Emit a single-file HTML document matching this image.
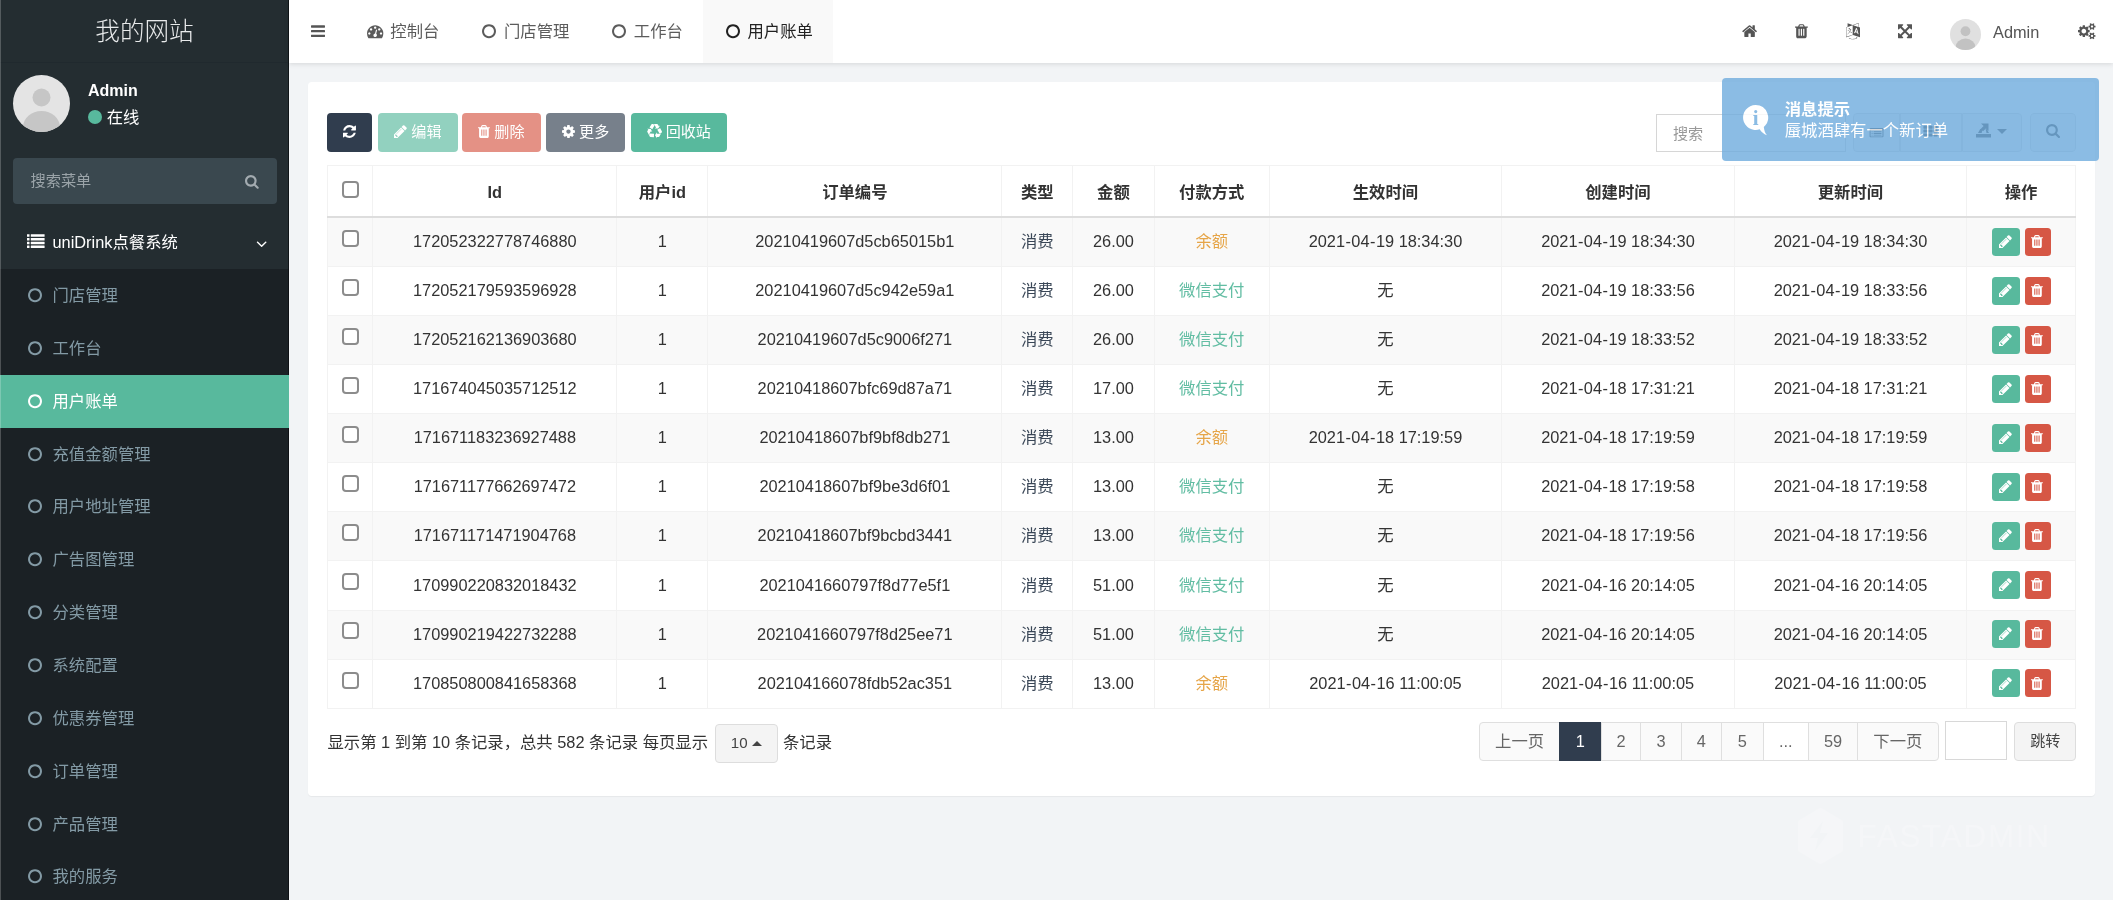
<!DOCTYPE html><html lang="zh-CN"><head><meta charset="utf-8"><title>FastAdmin</title><style>
*{box-sizing:border-box}
html,body{margin:0;padding:0}
body{width:2113px;height:900px;overflow:hidden;background:#f2f4f6;font-family:"Liberation Sans","Noto Sans CJK SC",sans-serif;font-size:16.35px;color:#333;position:relative;-webkit-font-smoothing:antialiased}
#wrap{position:absolute;left:0;top:0;width:2113px;height:900px;will-change:transform;overflow:hidden}
svg.ic{display:inline-block;vertical-align:middle;overflow:visible}
.abs{position:absolute}
#sidebar{position:absolute;left:0;top:0;width:289px;height:900px;background:#242d31}
#edge{position:absolute;left:0;top:0;width:1.2px;height:900px;background:rgba(255,255,255,.22);z-index:5}
#logo{position:absolute;left:0;top:0;width:289px;height:63px;line-height:63px;text-align:center;color:#e8eaeb;font-size:24.6px;font-weight:300;border-bottom:1px solid #20292e}
#avatar{position:absolute;left:12.5px;top:75px;width:57px;height:57px;border-radius:50%;background:#e4e4e4;overflow:hidden}
#uname{position:absolute;left:88px;top:80.5px;color:#fff;font-weight:bold;font-size:16px;line-height:20px}
#ustat{position:absolute;left:88px;top:107px;color:#fff;font-size:16.35px;line-height:20px}
#ustat i{display:inline-block;width:14px;height:14px;border-radius:50%;background:#58b99d;vertical-align:-1px;margin-right:4.7px}
#msearch{position:absolute;left:12.5px;top:157.5px;width:264.5px;height:46px;border-radius:4px;background:#3a484f;color:#9aa3a8;font-size:15.2px;line-height:46px;padding-left:18px}
#msearch svg{position:absolute;right:18.7px;top:16.2px}
.mhead{position:absolute;left:0;top:216px;width:289px;height:53px;line-height:53px;color:#fff;font-size:16.35px;background:transparent}
#submenu{position:absolute;left:0;top:269px;width:289px;height:631px;background:#1b2125}
.mi{position:absolute;left:0;width:289px;height:53px;line-height:53px;color:#839aa5;font-size:16.35px}
.mi.act{background:#58b99d;color:#fff}
.mi svg{position:absolute;left:27.7px;top:18px}
.mi span{position:absolute;left:52.5px;top:0}
#header{position:absolute;left:289px;top:0;width:1824px;height:63px;background:#fff;box-shadow:0 1px 5px rgba(0,0,0,.12)}
.tab{position:absolute;top:0;height:63px;line-height:62px;font-size:16.35px;color:#4a4a4a;white-space:nowrap}
.tab svg{margin-right:6px;vertical-align:-2px}
.tab.act{background:#f9f9f9;color:#222}
#panel{position:absolute;left:308.2px;top:82px;width:1786.5px;height:713.7px;background:#fff;border-radius:4px;box-shadow:0 1px 1px rgba(0,0,0,.05)}
.btn{position:absolute;top:113.3px;height:39px;border-radius:4px;color:#fff;font-size:15.1px;line-height:37.4px;text-align:center;white-space:nowrap}
.btn svg{vertical-align:-2px;margin-right:4px}
table{position:absolute;left:327px;top:164.7px;border-collapse:collapse;table-layout:fixed;width:1749px;font-size:16.35px}
th,td{border:1px solid #f2f2f2;text-align:center;padding:0;white-space:nowrap;overflow:hidden;line-height:20px;vertical-align:top}
th{height:52.1px;padding-top:16.6px;font-weight:bold;color:#333;border-bottom:2px solid #dddddd}
td{height:49.1px;color:#333;padding-top:13.1px}
tr.odd td{background:#f9f9f9}
.cb{display:inline-block;width:17px;height:17px;border:2px solid #8c8c8c;border-radius:4px;background:#fff;vertical-align:middle;position:relative;top:-4.4px;left:0.4px}
th .cb{top:-4.6px}
.hy{padding:0 .46px}
.tp{color:#3a4757}.tg{color:#62bda3}.to{color:#e6a548}
.ab{position:relative;top:-3.3px;display:inline-block;width:28px;height:28px;border-radius:3.5px;vertical-align:middle;text-align:center;line-height:24px}
.ab svg{position:relative;left:-.7px}
.ab.e{background:#58b99d;margin-right:5px;margin-left:0}.ab.d{background:#d65745;width:25.8px}
</style></head><body><div id="wrap">
<div id="sidebar">
<div id="logo">我的网站</div>
<div id="avatar"><svg width="57" height="57" viewBox="0 0 57 57"><circle cx="28.5" cy="22.5" r="9" fill="#c6c6c6"/><ellipse cx="28.5" cy="52" rx="18.5" ry="16" fill="#c6c6c6"/></svg></div>
<div id="uname">Admin</div><div id="ustat"><i></i>在线</div>
<div id="msearch">搜索菜单<svg class="ic " width="13.74" height="14.80" viewBox="0 -1536 1664 1792" style=""><path fill="#a3abb0" transform="scale(1,-1)" d="M1152 704q0 185 -131.5 316.5t-316.5 131.5t-316.5 -131.5t-131.5 -316.5t131.5 -316.5t316.5 -131.5t316.5 131.5t131.5 316.5zM1664 -128q0 -52 -38 -90t-90 -38q-54 0 -90 38l-343 342q-179 -124 -399 -124q-143 0 -273.5 55.5t-225 150t-150 225t-55.5 273.5
t55.5 273.5t150 225t225 150t273.5 55.5t273.5 -55.5t225 -150t150 -225t55.5 -273.5q0 -220 -124 -399l343 -343q37 -37 37 -90z"/></svg></div>
<div class="mhead"><svg class="ic " width="17.60" height="17.60" viewBox="0 -1536 1792 1792" style="position:absolute;left:26.5px;top:17px"><path fill="#fff" transform="scale(1,-1)" d="M256 224v-192q0 -13 -9.5 -22.5t-22.5 -9.5h-192q-13 0 -22.5 9.5t-9.5 22.5v192q0 13 9.5 22.5t22.5 9.5h192q13 0 22.5 -9.5t9.5 -22.5zM256 608v-192q0 -13 -9.5 -22.5t-22.5 -9.5h-192q-13 0 -22.5 9.5t-9.5 22.5v192q0 13 9.5 22.5t22.5 9.5h192q13 0 22.5 -9.5
t9.5 -22.5zM256 992v-192q0 -13 -9.5 -22.5t-22.5 -9.5h-192q-13 0 -22.5 9.5t-9.5 22.5v192q0 13 9.5 22.5t22.5 9.5h192q13 0 22.5 -9.5t9.5 -22.5zM1792 224v-192q0 -13 -9.5 -22.5t-22.5 -9.5h-1344q-13 0 -22.5 9.5t-9.5 22.5v192q0 13 9.5 22.5t22.5 9.5h1344
q13 0 22.5 -9.5t9.5 -22.5zM256 1376v-192q0 -13 -9.5 -22.5t-22.5 -9.5h-192q-13 0 -22.5 9.5t-9.5 22.5v192q0 13 9.5 22.5t22.5 9.5h192q13 0 22.5 -9.5t9.5 -22.5zM1792 608v-192q0 -13 -9.5 -22.5t-22.5 -9.5h-1344q-13 0 -22.5 9.5t-9.5 22.5v192q0 13 9.5 22.5
t22.5 9.5h1344q13 0 22.5 -9.5t9.5 -22.5zM1792 992v-192q0 -13 -9.5 -22.5t-22.5 -9.5h-1344q-13 0 -22.5 9.5t-9.5 22.5v192q0 13 9.5 22.5t22.5 9.5h1344q13 0 22.5 -9.5t9.5 -22.5zM1792 1376v-192q0 -13 -9.5 -22.5t-22.5 -9.5h-1344q-13 0 -22.5 9.5t-9.5 22.5v192
q0 13 9.5 22.5t22.5 9.5h1344q13 0 22.5 -9.5t9.5 -22.5z"/></svg><span style="position:absolute;left:52.5px">uniDrink点餐系统</span><svg class="ic " width="11.31" height="17.60" viewBox="0 -1536 1152 1792" style="position:absolute;left:255.8px;top:19px"><path fill="#fff" transform="scale(1,-1)" d="M1075 800q0 -13 -10 -23l-466 -466q-10 -10 -23 -10t-23 10l-466 466q-10 10 -10 23t10 23l50 50q10 10 23 10t23 -10l393 -393l393 393q10 10 23 10t23 -10l50 -50q10 -10 10 -23z"/></svg></div>
<div id="submenu"></div><div class="abs" style="left:287.7px;top:0;width:1.3px;height:900px;background:rgba(8,12,14,.7)"></div>
<div class="mi" style="top:269.00px"><svg class="ic " width="14.01" height="16.35" viewBox="0 -1536 1536 1792" style=""><path fill="currentColor" transform="scale(1,-1)" d="M768 1184q-148 0 -273 -73t-198 -198t-73 -273t73 -273t198 -198t273 -73t273 73t198 198t73 273t-73 273t-198 198t-273 73zM1536 640q0 -209 -103 -385.5t-279.5 -279.5t-385.5 -103t-385.5 103t-279.5 279.5t-103 385.5t103 385.5t279.5 279.5t385.5 103t385.5 -103
t279.5 -279.5t103 -385.5z"/></svg><span>门店管理</span></div>
<div class="mi" style="top:321.85px"><svg class="ic " width="14.01" height="16.35" viewBox="0 -1536 1536 1792" style=""><path fill="currentColor" transform="scale(1,-1)" d="M768 1184q-148 0 -273 -73t-198 -198t-73 -273t73 -273t198 -198t273 -73t273 73t198 198t73 273t-73 273t-198 198t-273 73zM1536 640q0 -209 -103 -385.5t-279.5 -279.5t-385.5 -103t-385.5 103t-279.5 279.5t-103 385.5t103 385.5t279.5 279.5t385.5 103t385.5 -103
t279.5 -279.5t103 -385.5z"/></svg><span>工作台</span></div>
<div class="mi act" style="top:374.70px"><svg class="ic " width="14.01" height="16.35" viewBox="0 -1536 1536 1792" style=""><path fill="currentColor" transform="scale(1,-1)" d="M768 1184q-148 0 -273 -73t-198 -198t-73 -273t73 -273t198 -198t273 -73t273 73t198 198t73 273t-73 273t-198 198t-273 73zM1536 640q0 -209 -103 -385.5t-279.5 -279.5t-385.5 -103t-385.5 103t-279.5 279.5t-103 385.5t103 385.5t279.5 279.5t385.5 103t385.5 -103
t279.5 -279.5t103 -385.5z"/></svg><span>用户账单</span></div>
<div class="mi" style="top:427.55px"><svg class="ic " width="14.01" height="16.35" viewBox="0 -1536 1536 1792" style=""><path fill="currentColor" transform="scale(1,-1)" d="M768 1184q-148 0 -273 -73t-198 -198t-73 -273t73 -273t198 -198t273 -73t273 73t198 198t73 273t-73 273t-198 198t-273 73zM1536 640q0 -209 -103 -385.5t-279.5 -279.5t-385.5 -103t-385.5 103t-279.5 279.5t-103 385.5t103 385.5t279.5 279.5t385.5 103t385.5 -103
t279.5 -279.5t103 -385.5z"/></svg><span>充值金额管理</span></div>
<div class="mi" style="top:480.40px"><svg class="ic " width="14.01" height="16.35" viewBox="0 -1536 1536 1792" style=""><path fill="currentColor" transform="scale(1,-1)" d="M768 1184q-148 0 -273 -73t-198 -198t-73 -273t73 -273t198 -198t273 -73t273 73t198 198t73 273t-73 273t-198 198t-273 73zM1536 640q0 -209 -103 -385.5t-279.5 -279.5t-385.5 -103t-385.5 103t-279.5 279.5t-103 385.5t103 385.5t279.5 279.5t385.5 103t385.5 -103
t279.5 -279.5t103 -385.5z"/></svg><span>用户地址管理</span></div>
<div class="mi" style="top:533.25px"><svg class="ic " width="14.01" height="16.35" viewBox="0 -1536 1536 1792" style=""><path fill="currentColor" transform="scale(1,-1)" d="M768 1184q-148 0 -273 -73t-198 -198t-73 -273t73 -273t198 -198t273 -73t273 73t198 198t73 273t-73 273t-198 198t-273 73zM1536 640q0 -209 -103 -385.5t-279.5 -279.5t-385.5 -103t-385.5 103t-279.5 279.5t-103 385.5t103 385.5t279.5 279.5t385.5 103t385.5 -103
t279.5 -279.5t103 -385.5z"/></svg><span>广告图管理</span></div>
<div class="mi" style="top:586.10px"><svg class="ic " width="14.01" height="16.35" viewBox="0 -1536 1536 1792" style=""><path fill="currentColor" transform="scale(1,-1)" d="M768 1184q-148 0 -273 -73t-198 -198t-73 -273t73 -273t198 -198t273 -73t273 73t198 198t73 273t-73 273t-198 198t-273 73zM1536 640q0 -209 -103 -385.5t-279.5 -279.5t-385.5 -103t-385.5 103t-279.5 279.5t-103 385.5t103 385.5t279.5 279.5t385.5 103t385.5 -103
t279.5 -279.5t103 -385.5z"/></svg><span>分类管理</span></div>
<div class="mi" style="top:638.95px"><svg class="ic " width="14.01" height="16.35" viewBox="0 -1536 1536 1792" style=""><path fill="currentColor" transform="scale(1,-1)" d="M768 1184q-148 0 -273 -73t-198 -198t-73 -273t73 -273t198 -198t273 -73t273 73t198 198t73 273t-73 273t-198 198t-273 73zM1536 640q0 -209 -103 -385.5t-279.5 -279.5t-385.5 -103t-385.5 103t-279.5 279.5t-103 385.5t103 385.5t279.5 279.5t385.5 103t385.5 -103
t279.5 -279.5t103 -385.5z"/></svg><span>系统配置</span></div>
<div class="mi" style="top:691.80px"><svg class="ic " width="14.01" height="16.35" viewBox="0 -1536 1536 1792" style=""><path fill="currentColor" transform="scale(1,-1)" d="M768 1184q-148 0 -273 -73t-198 -198t-73 -273t73 -273t198 -198t273 -73t273 73t198 198t73 273t-73 273t-198 198t-273 73zM1536 640q0 -209 -103 -385.5t-279.5 -279.5t-385.5 -103t-385.5 103t-279.5 279.5t-103 385.5t103 385.5t279.5 279.5t385.5 103t385.5 -103
t279.5 -279.5t103 -385.5z"/></svg><span>优惠券管理</span></div>
<div class="mi" style="top:744.65px"><svg class="ic " width="14.01" height="16.35" viewBox="0 -1536 1536 1792" style=""><path fill="currentColor" transform="scale(1,-1)" d="M768 1184q-148 0 -273 -73t-198 -198t-73 -273t73 -273t198 -198t273 -73t273 73t198 198t73 273t-73 273t-198 198t-273 73zM1536 640q0 -209 -103 -385.5t-279.5 -279.5t-385.5 -103t-385.5 103t-279.5 279.5t-103 385.5t103 385.5t279.5 279.5t385.5 103t385.5 -103
t279.5 -279.5t103 -385.5z"/></svg><span>订单管理</span></div>
<div class="mi" style="top:797.50px"><svg class="ic " width="14.01" height="16.35" viewBox="0 -1536 1536 1792" style=""><path fill="currentColor" transform="scale(1,-1)" d="M768 1184q-148 0 -273 -73t-198 -198t-73 -273t73 -273t198 -198t273 -73t273 73t198 198t73 273t-73 273t-198 198t-273 73zM1536 640q0 -209 -103 -385.5t-279.5 -279.5t-385.5 -103t-385.5 103t-279.5 279.5t-103 385.5t103 385.5t279.5 279.5t385.5 103t385.5 -103
t279.5 -279.5t103 -385.5z"/></svg><span>产品管理</span></div>
<div class="mi" style="top:850.35px"><svg class="ic " width="14.01" height="16.35" viewBox="0 -1536 1536 1792" style=""><path fill="currentColor" transform="scale(1,-1)" d="M768 1184q-148 0 -273 -73t-198 -198t-73 -273t73 -273t198 -198t273 -73t273 73t198 198t73 273t-73 273t-198 198t-273 73zM1536 640q0 -209 -103 -385.5t-279.5 -279.5t-385.5 -103t-385.5 103t-279.5 279.5t-103 385.5t103 385.5t279.5 279.5t385.5 103t385.5 -103
t279.5 -279.5t103 -385.5z"/></svg><span>我的服务</span></div>
</div><div id="edge"></div>
<div id="header">
<svg class="ic " width="14.01" height="16.35" viewBox="0 -1536 1536 1792" style="position:absolute;left:21.8px;top:23px"><path fill="#555" transform="scale(1,-1)" d="M1536 192v-128q0 -26 -19 -45t-45 -19h-1408q-26 0 -45 19t-19 45v128q0 26 19 45t45 19h1408q26 0 45 -19t19 -45zM1536 704v-128q0 -26 -19 -45t-45 -19h-1408q-26 0 -45 19t-19 45v128q0 26 19 45t45 19h1408q26 0 45 -19t19 -45zM1536 1216v-128q0 -26 -19 -45
t-45 -19h-1408q-26 0 -45 19t-19 45v128q0 26 19 45t45 19h1408q26 0 45 -19t19 -45z"/></svg>
<div class="tab act" style="left:414px;width:130px"></div>
<svg class="ic " width="16.35" height="16.35" viewBox="0 -1536 1792 1792" style="position:absolute;left:78.39999999999998px;top:22.8px"><path fill="#5c5c5c" transform="scale(1,-1)" d="M384 384q0 53 -37.5 90.5t-90.5 37.5t-90.5 -37.5t-37.5 -90.5t37.5 -90.5t90.5 -37.5t90.5 37.5t37.5 90.5zM576 832q0 53 -37.5 90.5t-90.5 37.5t-90.5 -37.5t-37.5 -90.5t37.5 -90.5t90.5 -37.5t90.5 37.5t37.5 90.5zM1004 351l101 382q6 26 -7.5 48.5t-38.5 29.5
t-48 -6.5t-30 -39.5l-101 -382q-60 -5 -107 -43.5t-63 -98.5q-20 -77 20 -146t117 -89t146 20t89 117q16 60 -6 117t-72 91zM1664 384q0 53 -37.5 90.5t-90.5 37.5t-90.5 -37.5t-37.5 -90.5t37.5 -90.5t90.5 -37.5t90.5 37.5t37.5 90.5zM1024 1024q0 53 -37.5 90.5
t-90.5 37.5t-90.5 -37.5t-37.5 -90.5t37.5 -90.5t90.5 -37.5t90.5 37.5t37.5 90.5zM1472 832q0 53 -37.5 90.5t-90.5 37.5t-90.5 -37.5t-37.5 -90.5t37.5 -90.5t90.5 -37.5t90.5 37.5t37.5 90.5zM1792 384q0 -261 -141 -483q-19 -29 -54 -29h-1402q-35 0 -54 29
q-141 221 -141 483q0 182 71 348t191 286t286 191t348 71t348 -71t286 -191t191 -286t71 -348z"/></svg>
<div class="tab" style="left:101.30000000000001px;color:#5c5c5c">控制台</div>
<svg class="ic " width="14.01" height="16.35" viewBox="0 -1536 1536 1792" style="position:absolute;left:193px;top:22.8px"><path fill="#5c5c5c" transform="scale(1,-1)" d="M768 1184q-148 0 -273 -73t-198 -198t-73 -273t73 -273t198 -198t273 -73t273 73t198 198t73 273t-73 273t-198 198t-273 73zM1536 640q0 -209 -103 -385.5t-279.5 -279.5t-385.5 -103t-385.5 103t-279.5 279.5t-103 385.5t103 385.5t279.5 279.5t385.5 103t385.5 -103
t279.5 -279.5t103 -385.5z"/></svg>
<div class="tab" style="left:215px;color:#5c5c5c">门店管理</div>
<svg class="ic " width="14.01" height="16.35" viewBox="0 -1536 1536 1792" style="position:absolute;left:323px;top:22.8px"><path fill="#5c5c5c" transform="scale(1,-1)" d="M768 1184q-148 0 -273 -73t-198 -198t-73 -273t73 -273t198 -198t273 -73t273 73t198 198t73 273t-73 273t-198 198t-273 73zM1536 640q0 -209 -103 -385.5t-279.5 -279.5t-385.5 -103t-385.5 103t-279.5 279.5t-103 385.5t103 385.5t279.5 279.5t385.5 103t385.5 -103
t279.5 -279.5t103 -385.5z"/></svg>
<div class="tab" style="left:344.79999999999995px;color:#5c5c5c">工作台</div>
<svg class="ic " width="14.01" height="16.35" viewBox="0 -1536 1536 1792" style="position:absolute;left:436.5px;top:22.8px"><path fill="#222" transform="scale(1,-1)" d="M768 1184q-148 0 -273 -73t-198 -198t-73 -273t73 -273t198 -198t273 -73t273 73t198 198t73 273t-73 273t-198 198t-273 73zM1536 640q0 -209 -103 -385.5t-279.5 -279.5t-385.5 -103t-385.5 103t-279.5 279.5t-103 385.5t103 385.5t279.5 279.5t385.5 103t385.5 -103
t279.5 -279.5t103 -385.5z"/></svg>
<div class="tab" style="left:458.5px;color:#222">用户账单</div>
<svg class="ic " width="15.18" height="16.35" viewBox="0 -1536 1664 1792" style="position:absolute;left:1452.5px;top:23.2px"><path fill="#555" transform="scale(1,-1)" d="M1408 544v-480q0 -26 -19 -45t-45 -19h-384v384h-256v-384h-384q-26 0 -45 19t-19 45v480q0 1 0.5 3t0.5 3l575 474l575 -474q1 -2 1 -6zM1631 613l-62 -74q-8 -9 -21 -11h-3q-13 0 -21 7l-692 577l-692 -577q-12 -8 -24 -7q-13 2 -21 11l-62 74q-8 10 -7 23.5t11 21.5
l719 599q32 26 76 26t76 -26l244 -204v195q0 14 9 23t23 9h192q14 0 23 -9t9 -23v-408l219 -182q10 -8 11 -21.5t-7 -23.5z"/></svg>
<svg class="ic " width="12.85" height="16.35" viewBox="0 -1536 1408 1792" style="position:absolute;left:1506.0px;top:23.2px"><path fill="#555" transform="scale(1,-1)" d="M512 160v704q0 14 -9 23t-23 9h-64q-14 0 -23 -9t-9 -23v-704q0 -14 9 -23t23 -9h64q14 0 23 9t9 23zM768 160v704q0 14 -9 23t-23 9h-64q-14 0 -23 -9t-9 -23v-704q0 -14 9 -23t23 -9h64q14 0 23 9t9 23zM1024 160v704q0 14 -9 23t-23 9h-64q-14 0 -23 -9t-9 -23v-704
q0 -14 9 -23t23 -9h64q14 0 23 9t9 23zM480 1152h448l-48 117q-7 9 -17 11h-317q-10 -2 -17 -11zM1408 1120v-64q0 -14 -9 -23t-23 -9h-96v-948q0 -83 -47 -143.5t-113 -60.5h-832q-66 0 -113 58.5t-47 141.5v952h-96q-14 0 -23 9t-9 23v64q0 14 9 23t23 9h309l70 167
q15 37 54 63t79 26h320q40 0 79 -26t54 -63l70 -167h309q14 0 23 -9t9 -23z"/></svg>
<svg class="ic " width="14.01" height="16.35" viewBox="0 -1536 1536 1792" style="position:absolute;left:1556.5px;top:23.2px"><path fill="#555" transform="scale(1,-1)" d="M654 458q-1 -3 -12.5 0.5t-31.5 11.5l-20 9q-44 20 -87 49q-7 5 -41 31.5t-38 28.5q-67 -103 -134 -181q-81 -95 -105 -110q-4 -2 -19.5 -4t-18.5 0q6 4 82 92q21 24 85.5 115t78.5 118q17 30 51 98.5t36 77.5q-8 1 -110 -33q-8 -2 -27.5 -7.5t-34.5 -9.5t-17 -5
q-2 -2 -2 -10.5t-1 -9.5q-5 -10 -31 -15q-23 -7 -47 0q-18 4 -28 21q-4 6 -5 23q6 2 24.5 5t29.5 6q58 16 105 32q100 35 102 35q10 2 43 19.5t44 21.5q9 3 21.5 8t14.5 5.5t6 -0.5q2 -12 -1 -33q0 -2 -12.5 -27t-26.5 -53.5t-17 -33.5q-25 -50 -77 -131l64 -28
q12 -6 74.5 -32t67.5 -28q4 -1 10.5 -25.5t4.5 -30.5zM449 944q3 -15 -4 -28q-12 -23 -50 -38q-30 -12 -60 -12q-26 3 -49 26q-14 15 -18 41l1 3q3 -3 19.5 -5t26.5 0t58 16q36 12 55 14q17 0 21 -17zM1147 815l63 -227l-139 42zM39 15l694 232v1032l-694 -233v-1031z
M1280 332l102 -31l-181 657l-100 31l-216 -536l102 -31l45 110l211 -65zM777 1294l573 -184v380zM1088 -29l158 -13l-54 -160l-40 66q-130 -83 -276 -108q-58 -12 -91 -12h-84q-79 0 -199.5 39t-183.5 85q-8 7 -8 16q0 8 5 13.5t13 5.5q4 0 18 -7.5t30.5 -16.5t20.5 -11
q73 -37 159.5 -61.5t157.5 -24.5q95 0 167 14.5t157 50.5q15 7 30.5 15.5t34 19t28.5 16.5zM1536 1050v-1079l-774 246q-14 -6 -375 -127.5t-368 -121.5q-13 0 -18 13q0 1 -1 3v1078q3 9 4 10q5 6 20 11q107 36 149 50v384l558 -198q2 0 160.5 55t316 108.5t161.5 53.5
q20 0 20 -21v-418z"/></svg>
<svg class="ic " width="14.01" height="16.35" viewBox="0 -1536 1536 1792" style="position:absolute;left:1608.5px;top:23.2px"><path fill="#555" transform="scale(1,-1)" d="M1283 995l-355 -355l355 -355l144 144q29 31 70 14q39 -17 39 -59v-448q0 -26 -19 -45t-45 -19h-448q-42 0 -59 40q-17 39 14 69l144 144l-355 355l-355 -355l144 -144q31 -30 14 -69q-17 -40 -59 -40h-448q-26 0 -45 19t-19 45v448q0 42 40 59q39 17 69 -14l144 -144
l355 355l-355 355l-144 -144q-19 -19 -45 -19q-12 0 -24 5q-40 17 -40 59v448q0 26 19 45t45 19h448q42 0 59 -40q17 -39 -14 -69l-144 -144l355 -355l355 355l-144 144q-31 30 -14 69q17 40 59 40h448q26 0 45 -19t19 -45v-448q0 -42 -39 -59q-13 -5 -25 -5q-26 0 -45 19z
"/></svg>
<div class="abs" style="left:1660.5px;top:19px;width:31px;height:31px;border-radius:50%;background:#e0e0e0;overflow:hidden"><svg width="31" height="31" viewBox="0 0 57 57"><circle cx="28.5" cy="22.5" r="9" fill="#c2c2c2"/><ellipse cx="28.5" cy="52" rx="18.5" ry="16" fill="#c2c2c2"/></svg></div>
<div class="abs" style="left:1704px;top:1px;line-height:63px;font-size:16.35px;color:#555">Admin</div>
<svg class="ic " width="17.52" height="16.35" viewBox="0 -1536 1920 1792" style="position:absolute;left:1789px;top:23.2px"><path fill="#555" transform="scale(1,-1)" d="M896 640q0 106 -75 181t-181 75t-181 -75t-75 -181t75 -181t181 -75t181 75t75 181zM1664 128q0 52 -38 90t-90 38t-90 -38t-38 -90q0 -53 37.5 -90.5t90.5 -37.5t90.5 37.5t37.5 90.5zM1664 1152q0 52 -38 90t-90 38t-90 -38t-38 -90q0 -53 37.5 -90.5t90.5 -37.5
t90.5 37.5t37.5 90.5zM1280 731v-185q0 -10 -7 -19.5t-16 -10.5l-155 -24q-11 -35 -32 -76q34 -48 90 -115q7 -11 7 -20q0 -12 -7 -19q-23 -30 -82.5 -89.5t-78.5 -59.5q-11 0 -21 7l-115 90q-37 -19 -77 -31q-11 -108 -23 -155q-7 -24 -30 -24h-186q-11 0 -20 7.5t-10 17.5
l-23 153q-34 10 -75 31l-118 -89q-7 -7 -20 -7q-11 0 -21 8q-144 133 -144 160q0 9 7 19q10 14 41 53t47 61q-23 44 -35 82l-152 24q-10 1 -17 9.5t-7 19.5v185q0 10 7 19.5t16 10.5l155 24q11 35 32 76q-34 48 -90 115q-7 11 -7 20q0 12 7 20q22 30 82 89t79 59q11 0 21 -7
l115 -90q34 18 77 32q11 108 23 154q7 24 30 24h186q11 0 20 -7.5t10 -17.5l23 -153q34 -10 75 -31l118 89q8 7 20 7q11 0 21 -8q144 -133 144 -160q0 -8 -7 -19q-12 -16 -42 -54t-45 -60q23 -48 34 -82l152 -23q10 -2 17 -10.5t7 -19.5zM1920 198v-140q0 -16 -149 -31
q-12 -27 -30 -52q51 -113 51 -138q0 -4 -4 -7q-122 -71 -124 -71q-8 0 -46 47t-52 68q-20 -2 -30 -2t-30 2q-14 -21 -52 -68t-46 -47q-2 0 -124 71q-4 3 -4 7q0 25 51 138q-18 25 -30 52q-149 15 -149 31v140q0 16 149 31q13 29 30 52q-51 113 -51 138q0 4 4 7q4 2 35 20
t59 34t30 16q8 0 46 -46.5t52 -67.5q20 2 30 2t30 -2q51 71 92 112l6 2q4 0 124 -70q4 -3 4 -7q0 -25 -51 -138q17 -23 30 -52q149 -15 149 -31zM1920 1222v-140q0 -16 -149 -31q-12 -27 -30 -52q51 -113 51 -138q0 -4 -4 -7q-122 -71 -124 -71q-8 0 -46 47t-52 68
q-20 -2 -30 -2t-30 2q-14 -21 -52 -68t-46 -47q-2 0 -124 71q-4 3 -4 7q0 25 51 138q-18 25 -30 52q-149 15 -149 31v140q0 16 149 31q13 29 30 52q-51 113 -51 138q0 4 4 7q4 2 35 20t59 34t30 16q8 0 46 -46.5t52 -67.5q20 2 30 2t30 -2q51 71 92 112l6 2q4 0 124 -70
q4 -3 4 -7q0 -25 -51 -138q17 -23 30 -52q149 -15 149 -31z"/></svg>
</div>
<div id="panel"></div>
<div class="btn" style="left:327.3px;width:45px;background:#303d4e"><svg class="ic " width="12.94" height="15.10" viewBox="0 -1536 1536 1792" style="margin:0"><path fill="#fff" transform="scale(1,-1)" d="M1511 480q0 -5 -1 -7q-64 -268 -268 -434.5t-478 -166.5q-146 0 -282.5 55t-243.5 157l-129 -129q-19 -19 -45 -19t-45 19t-19 45v448q0 26 19 45t45 19h448q26 0 45 -19t19 -45t-19 -45l-137 -137q71 -66 161 -102t187 -36q134 0 250 65t186 179q11 17 53 117
q8 23 30 23h192q13 0 22.5 -9.5t9.5 -22.5zM1536 1280v-448q0 -26 -19 -45t-45 -19h-448q-26 0 -45 19t-19 45t19 45l138 138q-148 137 -349 137q-134 0 -250 -65t-186 -179q-11 -17 -53 -117q-8 -23 -30 -23h-199q-13 0 -22.5 9.5t-9.5 22.5v7q65 268 270 434.5t480 166.5
q146 0 284 -55.5t245 -156.5l130 129q19 19 45 19t45 -19t19 -45z"/></svg></div>
<div class="btn" style="left:377.7px;width:80.5px;background:#58b99d;opacity:.65"><svg class="ic " width="12.94" height="15.10" viewBox="0 -1536 1536 1792" style=""><path fill="#fff" transform="scale(1,-1)" d="M363 0l91 91l-235 235l-91 -91v-107h128v-128h107zM886 928q0 22 -22 22q-10 0 -17 -7l-542 -542q-7 -7 -7 -17q0 -22 22 -22q10 0 17 7l542 542q7 7 7 17zM832 1120l416 -416l-832 -832h-416v416zM1515 1024q0 -53 -37 -90l-166 -166l-416 416l166 165q36 38 90 38
q53 0 91 -38l235 -234q37 -39 37 -91z"/></svg>编辑</div>
<div class="btn" style="left:462px;width:79px;background:#d65745;opacity:.65"><svg class="ic " width="11.86" height="15.10" viewBox="0 -1536 1408 1792" style=""><path fill="#fff" transform="scale(1,-1)" d="M512 160v704q0 14 -9 23t-23 9h-64q-14 0 -23 -9t-9 -23v-704q0 -14 9 -23t23 -9h64q14 0 23 9t9 23zM768 160v704q0 14 -9 23t-23 9h-64q-14 0 -23 -9t-9 -23v-704q0 -14 9 -23t23 -9h64q14 0 23 9t9 23zM1024 160v704q0 14 -9 23t-23 9h-64q-14 0 -23 -9t-9 -23v-704
q0 -14 9 -23t23 -9h64q14 0 23 9t9 23zM480 1152h448l-48 117q-7 9 -17 11h-317q-10 -2 -17 -11zM1408 1120v-64q0 -14 -9 -23t-23 -9h-96v-948q0 -83 -47 -143.5t-113 -60.5h-832q-66 0 -113 58.5t-47 141.5v952h-96q-14 0 -23 9t-9 23v64q0 14 9 23t23 9h309l70 167
q15 37 54 63t79 26h320q40 0 79 -26t54 -63l70 -167h309q14 0 23 -9t9 -23z"/></svg>删除</div>
<div class="btn" style="left:546.2px;width:79px;background:#303d4e;opacity:.65"><svg class="ic " width="12.94" height="15.10" viewBox="0 -1536 1536 1792" style=""><path fill="#fff" transform="scale(1,-1)" d="M1024 640q0 106 -75 181t-181 75t-181 -75t-75 -181t75 -181t181 -75t181 75t75 181zM1536 749v-222q0 -12 -8 -23t-20 -13l-185 -28q-19 -54 -39 -91q35 -50 107 -138q10 -12 10 -25t-9 -23q-27 -37 -99 -108t-94 -71q-12 0 -26 9l-138 108q-44 -23 -91 -38
q-16 -136 -29 -186q-7 -28 -36 -28h-222q-14 0 -24.5 8.5t-11.5 21.5l-28 184q-49 16 -90 37l-141 -107q-10 -9 -25 -9q-14 0 -25 11q-126 114 -165 168q-7 10 -7 23q0 12 8 23q15 21 51 66.5t54 70.5q-27 50 -41 99l-183 27q-13 2 -21 12.5t-8 23.5v222q0 12 8 23t19 13
l186 28q14 46 39 92q-40 57 -107 138q-10 12 -10 24q0 10 9 23q26 36 98.5 107.5t94.5 71.5q13 0 26 -10l138 -107q44 23 91 38q16 136 29 186q7 28 36 28h222q14 0 24.5 -8.5t11.5 -21.5l28 -184q49 -16 90 -37l142 107q9 9 24 9q13 0 25 -10q129 -119 165 -170q7 -8 7 -22
q0 -12 -8 -23q-15 -21 -51 -66.5t-54 -70.5q26 -50 41 -98l183 -28q13 -2 21 -12.5t8 -23.5z"/></svg>更多</div>
<div class="btn" style="left:630.5px;width:96.5px;background:#58b99d"><svg class="ic " width="15.10" height="15.10" viewBox="0 -1536 1792 1792" style=""><path fill="#fff" transform="scale(1,-1)" d="M836 367l-15 -368l-2 -22l-420 29q-36 3 -67 31.5t-47 65.5q-11 27 -14.5 55t4 65t12 55t21.5 64t19 53q78 -12 509 -28zM449 953l180 -379l-147 92q-63 -72 -111.5 -144.5t-72.5 -125t-39.5 -94.5t-18.5 -63l-4 -21l-190 357q-17 26 -18 56t6 47l8 18q35 63 114 188
l-140 86zM1680 436l-188 -359q-12 -29 -36.5 -46.5t-43.5 -20.5l-18 -4q-71 -7 -219 -12l8 -164l-230 367l211 362l7 -173q170 -16 283 -5t170 33zM895 1360q-47 -63 -265 -435l-317 187l-19 12l225 356q20 31 60 45t80 10q24 -2 48.5 -12t42 -21t41.5 -33t36 -34.5
t36 -39.5t32 -35zM1550 1053l212 -363q18 -37 12.5 -76t-27.5 -74q-13 -20 -33 -37t-38 -28t-48.5 -22t-47 -16t-51.5 -14t-46 -12q-34 72 -265 436l313 195zM1407 1279l142 83l-220 -373l-419 20l151 86q-34 89 -75 166t-75.5 123.5t-64.5 80t-47 46.5l-17 13l405 -1
q31 3 58 -10.5t39 -28.5l11 -15q39 -61 112 -190z"/></svg>回收站</div>
<table><colgroup><col style="width:45.2px"><col style="width:244.3px"><col style="width:90.7px"><col style="width:294.3px"><col style="width:70.7px"><col style="width:81.6px"><col style="width:115px"><col style="width:232.4px"><col style="width:232.6px"><col style="width:232.4px"><col style="width:109px"></colgroup><thead><tr>
<th><span class=cb></span></th>
<th>Id</th>
<th>用户id</th>
<th>订单编号</th>
<th>类型</th>
<th>金额</th>
<th>付款方式</th>
<th>生效时间</th>
<th>创建时间</th>
<th>更新时间</th>
<th>操作</th>
</tr></thead><tbody>
<tr class="odd"><td><span class="cb"></span></td><td>172052322778746880</td><td>1</td><td>20210419607d5cb65015b1</td><td class="tp">消费</td><td>26.00</td><td class="to">余额</td><td>2021<span class="hy">-</span>04<span class="hy">-</span>19 18:34:30</td><td>2021<span class="hy">-</span>04<span class="hy">-</span>19 18:34:30</td><td>2021<span class="hy">-</span>04<span class="hy">-</span>19 18:34:30</td><td><span class="ab e"><svg class="ic " width="12.94" height="15.10" viewBox="0 -1536 1536 1792" style=""><path fill="#fff" transform="scale(1,-1)" d="M363 0l91 91l-235 235l-91 -91v-107h128v-128h107zM886 928q0 22 -22 22q-10 0 -17 -7l-542 -542q-7 -7 -7 -17q0 -22 22 -22q10 0 17 7l542 542q7 7 7 17zM832 1120l416 -416l-832 -832h-416v416zM1515 1024q0 -53 -37 -90l-166 -166l-416 416l166 165q36 38 90 38
q53 0 91 -38l235 -234q37 -39 37 -91z"/></svg></span><span class="ab d"><svg class="ic " width="11.86" height="15.10" viewBox="0 -1536 1408 1792" style=""><path fill="#fff" transform="scale(1,-1)" d="M512 160v704q0 14 -9 23t-23 9h-64q-14 0 -23 -9t-9 -23v-704q0 -14 9 -23t23 -9h64q14 0 23 9t9 23zM768 160v704q0 14 -9 23t-23 9h-64q-14 0 -23 -9t-9 -23v-704q0 -14 9 -23t23 -9h64q14 0 23 9t9 23zM1024 160v704q0 14 -9 23t-23 9h-64q-14 0 -23 -9t-9 -23v-704
q0 -14 9 -23t23 -9h64q14 0 23 9t9 23zM480 1152h448l-48 117q-7 9 -17 11h-317q-10 -2 -17 -11zM1408 1120v-64q0 -14 -9 -23t-23 -9h-96v-948q0 -83 -47 -143.5t-113 -60.5h-832q-66 0 -113 58.5t-47 141.5v952h-96q-14 0 -23 9t-9 23v64q0 14 9 23t23 9h309l70 167
q15 37 54 63t79 26h320q40 0 79 -26t54 -63l70 -167h309q14 0 23 -9t9 -23z"/></svg></span></td></tr>
<tr class=""><td><span class="cb"></span></td><td>172052179593596928</td><td>1</td><td>20210419607d5c942e59a1</td><td class="tp">消费</td><td>26.00</td><td class="tg">微信支付</td><td>无</td><td>2021<span class="hy">-</span>04<span class="hy">-</span>19 18:33:56</td><td>2021<span class="hy">-</span>04<span class="hy">-</span>19 18:33:56</td><td><span class="ab e"><svg class="ic " width="12.94" height="15.10" viewBox="0 -1536 1536 1792" style=""><path fill="#fff" transform="scale(1,-1)" d="M363 0l91 91l-235 235l-91 -91v-107h128v-128h107zM886 928q0 22 -22 22q-10 0 -17 -7l-542 -542q-7 -7 -7 -17q0 -22 22 -22q10 0 17 7l542 542q7 7 7 17zM832 1120l416 -416l-832 -832h-416v416zM1515 1024q0 -53 -37 -90l-166 -166l-416 416l166 165q36 38 90 38
q53 0 91 -38l235 -234q37 -39 37 -91z"/></svg></span><span class="ab d"><svg class="ic " width="11.86" height="15.10" viewBox="0 -1536 1408 1792" style=""><path fill="#fff" transform="scale(1,-1)" d="M512 160v704q0 14 -9 23t-23 9h-64q-14 0 -23 -9t-9 -23v-704q0 -14 9 -23t23 -9h64q14 0 23 9t9 23zM768 160v704q0 14 -9 23t-23 9h-64q-14 0 -23 -9t-9 -23v-704q0 -14 9 -23t23 -9h64q14 0 23 9t9 23zM1024 160v704q0 14 -9 23t-23 9h-64q-14 0 -23 -9t-9 -23v-704
q0 -14 9 -23t23 -9h64q14 0 23 9t9 23zM480 1152h448l-48 117q-7 9 -17 11h-317q-10 -2 -17 -11zM1408 1120v-64q0 -14 -9 -23t-23 -9h-96v-948q0 -83 -47 -143.5t-113 -60.5h-832q-66 0 -113 58.5t-47 141.5v952h-96q-14 0 -23 9t-9 23v64q0 14 9 23t23 9h309l70 167
q15 37 54 63t79 26h320q40 0 79 -26t54 -63l70 -167h309q14 0 23 -9t9 -23z"/></svg></span></td></tr>
<tr class="odd"><td><span class="cb"></span></td><td>172052162136903680</td><td>1</td><td>20210419607d5c9006f271</td><td class="tp">消费</td><td>26.00</td><td class="tg">微信支付</td><td>无</td><td>2021<span class="hy">-</span>04<span class="hy">-</span>19 18:33:52</td><td>2021<span class="hy">-</span>04<span class="hy">-</span>19 18:33:52</td><td><span class="ab e"><svg class="ic " width="12.94" height="15.10" viewBox="0 -1536 1536 1792" style=""><path fill="#fff" transform="scale(1,-1)" d="M363 0l91 91l-235 235l-91 -91v-107h128v-128h107zM886 928q0 22 -22 22q-10 0 -17 -7l-542 -542q-7 -7 -7 -17q0 -22 22 -22q10 0 17 7l542 542q7 7 7 17zM832 1120l416 -416l-832 -832h-416v416zM1515 1024q0 -53 -37 -90l-166 -166l-416 416l166 165q36 38 90 38
q53 0 91 -38l235 -234q37 -39 37 -91z"/></svg></span><span class="ab d"><svg class="ic " width="11.86" height="15.10" viewBox="0 -1536 1408 1792" style=""><path fill="#fff" transform="scale(1,-1)" d="M512 160v704q0 14 -9 23t-23 9h-64q-14 0 -23 -9t-9 -23v-704q0 -14 9 -23t23 -9h64q14 0 23 9t9 23zM768 160v704q0 14 -9 23t-23 9h-64q-14 0 -23 -9t-9 -23v-704q0 -14 9 -23t23 -9h64q14 0 23 9t9 23zM1024 160v704q0 14 -9 23t-23 9h-64q-14 0 -23 -9t-9 -23v-704
q0 -14 9 -23t23 -9h64q14 0 23 9t9 23zM480 1152h448l-48 117q-7 9 -17 11h-317q-10 -2 -17 -11zM1408 1120v-64q0 -14 -9 -23t-23 -9h-96v-948q0 -83 -47 -143.5t-113 -60.5h-832q-66 0 -113 58.5t-47 141.5v952h-96q-14 0 -23 9t-9 23v64q0 14 9 23t23 9h309l70 167
q15 37 54 63t79 26h320q40 0 79 -26t54 -63l70 -167h309q14 0 23 -9t9 -23z"/></svg></span></td></tr>
<tr class=""><td><span class="cb"></span></td><td>171674045035712512</td><td>1</td><td>20210418607bfc69d87a71</td><td class="tp">消费</td><td>17.00</td><td class="tg">微信支付</td><td>无</td><td>2021<span class="hy">-</span>04<span class="hy">-</span>18 17:31:21</td><td>2021<span class="hy">-</span>04<span class="hy">-</span>18 17:31:21</td><td><span class="ab e"><svg class="ic " width="12.94" height="15.10" viewBox="0 -1536 1536 1792" style=""><path fill="#fff" transform="scale(1,-1)" d="M363 0l91 91l-235 235l-91 -91v-107h128v-128h107zM886 928q0 22 -22 22q-10 0 -17 -7l-542 -542q-7 -7 -7 -17q0 -22 22 -22q10 0 17 7l542 542q7 7 7 17zM832 1120l416 -416l-832 -832h-416v416zM1515 1024q0 -53 -37 -90l-166 -166l-416 416l166 165q36 38 90 38
q53 0 91 -38l235 -234q37 -39 37 -91z"/></svg></span><span class="ab d"><svg class="ic " width="11.86" height="15.10" viewBox="0 -1536 1408 1792" style=""><path fill="#fff" transform="scale(1,-1)" d="M512 160v704q0 14 -9 23t-23 9h-64q-14 0 -23 -9t-9 -23v-704q0 -14 9 -23t23 -9h64q14 0 23 9t9 23zM768 160v704q0 14 -9 23t-23 9h-64q-14 0 -23 -9t-9 -23v-704q0 -14 9 -23t23 -9h64q14 0 23 9t9 23zM1024 160v704q0 14 -9 23t-23 9h-64q-14 0 -23 -9t-9 -23v-704
q0 -14 9 -23t23 -9h64q14 0 23 9t9 23zM480 1152h448l-48 117q-7 9 -17 11h-317q-10 -2 -17 -11zM1408 1120v-64q0 -14 -9 -23t-23 -9h-96v-948q0 -83 -47 -143.5t-113 -60.5h-832q-66 0 -113 58.5t-47 141.5v952h-96q-14 0 -23 9t-9 23v64q0 14 9 23t23 9h309l70 167
q15 37 54 63t79 26h320q40 0 79 -26t54 -63l70 -167h309q14 0 23 -9t9 -23z"/></svg></span></td></tr>
<tr class="odd"><td><span class="cb"></span></td><td>171671183236927488</td><td>1</td><td>20210418607bf9bf8db271</td><td class="tp">消费</td><td>13.00</td><td class="to">余额</td><td>2021<span class="hy">-</span>04<span class="hy">-</span>18 17:19:59</td><td>2021<span class="hy">-</span>04<span class="hy">-</span>18 17:19:59</td><td>2021<span class="hy">-</span>04<span class="hy">-</span>18 17:19:59</td><td><span class="ab e"><svg class="ic " width="12.94" height="15.10" viewBox="0 -1536 1536 1792" style=""><path fill="#fff" transform="scale(1,-1)" d="M363 0l91 91l-235 235l-91 -91v-107h128v-128h107zM886 928q0 22 -22 22q-10 0 -17 -7l-542 -542q-7 -7 -7 -17q0 -22 22 -22q10 0 17 7l542 542q7 7 7 17zM832 1120l416 -416l-832 -832h-416v416zM1515 1024q0 -53 -37 -90l-166 -166l-416 416l166 165q36 38 90 38
q53 0 91 -38l235 -234q37 -39 37 -91z"/></svg></span><span class="ab d"><svg class="ic " width="11.86" height="15.10" viewBox="0 -1536 1408 1792" style=""><path fill="#fff" transform="scale(1,-1)" d="M512 160v704q0 14 -9 23t-23 9h-64q-14 0 -23 -9t-9 -23v-704q0 -14 9 -23t23 -9h64q14 0 23 9t9 23zM768 160v704q0 14 -9 23t-23 9h-64q-14 0 -23 -9t-9 -23v-704q0 -14 9 -23t23 -9h64q14 0 23 9t9 23zM1024 160v704q0 14 -9 23t-23 9h-64q-14 0 -23 -9t-9 -23v-704
q0 -14 9 -23t23 -9h64q14 0 23 9t9 23zM480 1152h448l-48 117q-7 9 -17 11h-317q-10 -2 -17 -11zM1408 1120v-64q0 -14 -9 -23t-23 -9h-96v-948q0 -83 -47 -143.5t-113 -60.5h-832q-66 0 -113 58.5t-47 141.5v952h-96q-14 0 -23 9t-9 23v64q0 14 9 23t23 9h309l70 167
q15 37 54 63t79 26h320q40 0 79 -26t54 -63l70 -167h309q14 0 23 -9t9 -23z"/></svg></span></td></tr>
<tr class=""><td><span class="cb"></span></td><td>171671177662697472</td><td>1</td><td>20210418607bf9be3d6f01</td><td class="tp">消费</td><td>13.00</td><td class="tg">微信支付</td><td>无</td><td>2021<span class="hy">-</span>04<span class="hy">-</span>18 17:19:58</td><td>2021<span class="hy">-</span>04<span class="hy">-</span>18 17:19:58</td><td><span class="ab e"><svg class="ic " width="12.94" height="15.10" viewBox="0 -1536 1536 1792" style=""><path fill="#fff" transform="scale(1,-1)" d="M363 0l91 91l-235 235l-91 -91v-107h128v-128h107zM886 928q0 22 -22 22q-10 0 -17 -7l-542 -542q-7 -7 -7 -17q0 -22 22 -22q10 0 17 7l542 542q7 7 7 17zM832 1120l416 -416l-832 -832h-416v416zM1515 1024q0 -53 -37 -90l-166 -166l-416 416l166 165q36 38 90 38
q53 0 91 -38l235 -234q37 -39 37 -91z"/></svg></span><span class="ab d"><svg class="ic " width="11.86" height="15.10" viewBox="0 -1536 1408 1792" style=""><path fill="#fff" transform="scale(1,-1)" d="M512 160v704q0 14 -9 23t-23 9h-64q-14 0 -23 -9t-9 -23v-704q0 -14 9 -23t23 -9h64q14 0 23 9t9 23zM768 160v704q0 14 -9 23t-23 9h-64q-14 0 -23 -9t-9 -23v-704q0 -14 9 -23t23 -9h64q14 0 23 9t9 23zM1024 160v704q0 14 -9 23t-23 9h-64q-14 0 -23 -9t-9 -23v-704
q0 -14 9 -23t23 -9h64q14 0 23 9t9 23zM480 1152h448l-48 117q-7 9 -17 11h-317q-10 -2 -17 -11zM1408 1120v-64q0 -14 -9 -23t-23 -9h-96v-948q0 -83 -47 -143.5t-113 -60.5h-832q-66 0 -113 58.5t-47 141.5v952h-96q-14 0 -23 9t-9 23v64q0 14 9 23t23 9h309l70 167
q15 37 54 63t79 26h320q40 0 79 -26t54 -63l70 -167h309q14 0 23 -9t9 -23z"/></svg></span></td></tr>
<tr class="odd"><td><span class="cb"></span></td><td>171671171471904768</td><td>1</td><td>20210418607bf9bcbd3441</td><td class="tp">消费</td><td>13.00</td><td class="tg">微信支付</td><td>无</td><td>2021<span class="hy">-</span>04<span class="hy">-</span>18 17:19:56</td><td>2021<span class="hy">-</span>04<span class="hy">-</span>18 17:19:56</td><td><span class="ab e"><svg class="ic " width="12.94" height="15.10" viewBox="0 -1536 1536 1792" style=""><path fill="#fff" transform="scale(1,-1)" d="M363 0l91 91l-235 235l-91 -91v-107h128v-128h107zM886 928q0 22 -22 22q-10 0 -17 -7l-542 -542q-7 -7 -7 -17q0 -22 22 -22q10 0 17 7l542 542q7 7 7 17zM832 1120l416 -416l-832 -832h-416v416zM1515 1024q0 -53 -37 -90l-166 -166l-416 416l166 165q36 38 90 38
q53 0 91 -38l235 -234q37 -39 37 -91z"/></svg></span><span class="ab d"><svg class="ic " width="11.86" height="15.10" viewBox="0 -1536 1408 1792" style=""><path fill="#fff" transform="scale(1,-1)" d="M512 160v704q0 14 -9 23t-23 9h-64q-14 0 -23 -9t-9 -23v-704q0 -14 9 -23t23 -9h64q14 0 23 9t9 23zM768 160v704q0 14 -9 23t-23 9h-64q-14 0 -23 -9t-9 -23v-704q0 -14 9 -23t23 -9h64q14 0 23 9t9 23zM1024 160v704q0 14 -9 23t-23 9h-64q-14 0 -23 -9t-9 -23v-704
q0 -14 9 -23t23 -9h64q14 0 23 9t9 23zM480 1152h448l-48 117q-7 9 -17 11h-317q-10 -2 -17 -11zM1408 1120v-64q0 -14 -9 -23t-23 -9h-96v-948q0 -83 -47 -143.5t-113 -60.5h-832q-66 0 -113 58.5t-47 141.5v952h-96q-14 0 -23 9t-9 23v64q0 14 9 23t23 9h309l70 167
q15 37 54 63t79 26h320q40 0 79 -26t54 -63l70 -167h309q14 0 23 -9t9 -23z"/></svg></span></td></tr>
<tr class=""><td><span class="cb"></span></td><td>170990220832018432</td><td>1</td><td>2021041660797f8d77e5f1</td><td class="tp">消费</td><td>51.00</td><td class="tg">微信支付</td><td>无</td><td>2021<span class="hy">-</span>04<span class="hy">-</span>16 20:14:05</td><td>2021<span class="hy">-</span>04<span class="hy">-</span>16 20:14:05</td><td><span class="ab e"><svg class="ic " width="12.94" height="15.10" viewBox="0 -1536 1536 1792" style=""><path fill="#fff" transform="scale(1,-1)" d="M363 0l91 91l-235 235l-91 -91v-107h128v-128h107zM886 928q0 22 -22 22q-10 0 -17 -7l-542 -542q-7 -7 -7 -17q0 -22 22 -22q10 0 17 7l542 542q7 7 7 17zM832 1120l416 -416l-832 -832h-416v416zM1515 1024q0 -53 -37 -90l-166 -166l-416 416l166 165q36 38 90 38
q53 0 91 -38l235 -234q37 -39 37 -91z"/></svg></span><span class="ab d"><svg class="ic " width="11.86" height="15.10" viewBox="0 -1536 1408 1792" style=""><path fill="#fff" transform="scale(1,-1)" d="M512 160v704q0 14 -9 23t-23 9h-64q-14 0 -23 -9t-9 -23v-704q0 -14 9 -23t23 -9h64q14 0 23 9t9 23zM768 160v704q0 14 -9 23t-23 9h-64q-14 0 -23 -9t-9 -23v-704q0 -14 9 -23t23 -9h64q14 0 23 9t9 23zM1024 160v704q0 14 -9 23t-23 9h-64q-14 0 -23 -9t-9 -23v-704
q0 -14 9 -23t23 -9h64q14 0 23 9t9 23zM480 1152h448l-48 117q-7 9 -17 11h-317q-10 -2 -17 -11zM1408 1120v-64q0 -14 -9 -23t-23 -9h-96v-948q0 -83 -47 -143.5t-113 -60.5h-832q-66 0 -113 58.5t-47 141.5v952h-96q-14 0 -23 9t-9 23v64q0 14 9 23t23 9h309l70 167
q15 37 54 63t79 26h320q40 0 79 -26t54 -63l70 -167h309q14 0 23 -9t9 -23z"/></svg></span></td></tr>
<tr class="odd"><td><span class="cb"></span></td><td>170990219422732288</td><td>1</td><td>2021041660797f8d25ee71</td><td class="tp">消费</td><td>51.00</td><td class="tg">微信支付</td><td>无</td><td>2021<span class="hy">-</span>04<span class="hy">-</span>16 20:14:05</td><td>2021<span class="hy">-</span>04<span class="hy">-</span>16 20:14:05</td><td><span class="ab e"><svg class="ic " width="12.94" height="15.10" viewBox="0 -1536 1536 1792" style=""><path fill="#fff" transform="scale(1,-1)" d="M363 0l91 91l-235 235l-91 -91v-107h128v-128h107zM886 928q0 22 -22 22q-10 0 -17 -7l-542 -542q-7 -7 -7 -17q0 -22 22 -22q10 0 17 7l542 542q7 7 7 17zM832 1120l416 -416l-832 -832h-416v416zM1515 1024q0 -53 -37 -90l-166 -166l-416 416l166 165q36 38 90 38
q53 0 91 -38l235 -234q37 -39 37 -91z"/></svg></span><span class="ab d"><svg class="ic " width="11.86" height="15.10" viewBox="0 -1536 1408 1792" style=""><path fill="#fff" transform="scale(1,-1)" d="M512 160v704q0 14 -9 23t-23 9h-64q-14 0 -23 -9t-9 -23v-704q0 -14 9 -23t23 -9h64q14 0 23 9t9 23zM768 160v704q0 14 -9 23t-23 9h-64q-14 0 -23 -9t-9 -23v-704q0 -14 9 -23t23 -9h64q14 0 23 9t9 23zM1024 160v704q0 14 -9 23t-23 9h-64q-14 0 -23 -9t-9 -23v-704
q0 -14 9 -23t23 -9h64q14 0 23 9t9 23zM480 1152h448l-48 117q-7 9 -17 11h-317q-10 -2 -17 -11zM1408 1120v-64q0 -14 -9 -23t-23 -9h-96v-948q0 -83 -47 -143.5t-113 -60.5h-832q-66 0 -113 58.5t-47 141.5v952h-96q-14 0 -23 9t-9 23v64q0 14 9 23t23 9h309l70 167
q15 37 54 63t79 26h320q40 0 79 -26t54 -63l70 -167h309q14 0 23 -9t9 -23z"/></svg></span></td></tr>
<tr class=""><td><span class="cb"></span></td><td>170850800841658368</td><td>1</td><td>202104166078fdb52ac351</td><td class="tp">消费</td><td>13.00</td><td class="to">余额</td><td>2021<span class="hy">-</span>04<span class="hy">-</span>16 11:00:05</td><td>2021<span class="hy">-</span>04<span class="hy">-</span>16 11:00:05</td><td>2021<span class="hy">-</span>04<span class="hy">-</span>16 11:00:05</td><td><span class="ab e"><svg class="ic " width="12.94" height="15.10" viewBox="0 -1536 1536 1792" style=""><path fill="#fff" transform="scale(1,-1)" d="M363 0l91 91l-235 235l-91 -91v-107h128v-128h107zM886 928q0 22 -22 22q-10 0 -17 -7l-542 -542q-7 -7 -7 -17q0 -22 22 -22q10 0 17 7l542 542q7 7 7 17zM832 1120l416 -416l-832 -832h-416v416zM1515 1024q0 -53 -37 -90l-166 -166l-416 416l166 165q36 38 90 38
q53 0 91 -38l235 -234q37 -39 37 -91z"/></svg></span><span class="ab d"><svg class="ic " width="11.86" height="15.10" viewBox="0 -1536 1408 1792" style=""><path fill="#fff" transform="scale(1,-1)" d="M512 160v704q0 14 -9 23t-23 9h-64q-14 0 -23 -9t-9 -23v-704q0 -14 9 -23t23 -9h64q14 0 23 9t9 23zM768 160v704q0 14 -9 23t-23 9h-64q-14 0 -23 -9t-9 -23v-704q0 -14 9 -23t23 -9h64q14 0 23 9t9 23zM1024 160v704q0 14 -9 23t-23 9h-64q-14 0 -23 -9t-9 -23v-704
q0 -14 9 -23t23 -9h64q14 0 23 9t9 23zM480 1152h448l-48 117q-7 9 -17 11h-317q-10 -2 -17 -11zM1408 1120v-64q0 -14 -9 -23t-23 -9h-96v-948q0 -83 -47 -143.5t-113 -60.5h-832q-66 0 -113 58.5t-47 141.5v952h-96q-14 0 -23 9t-9 23v64q0 14 9 23t23 9h309l70 167
q15 37 54 63t79 26h320q40 0 79 -26t54 -63l70 -167h309q14 0 23 -9t9 -23z"/></svg></span></td></tr>
</tbody></table>
<div class="abs" style="left:327.5px;top:732px;line-height:20px;font-size:16.35px;color:#333;white-space:nowrap">显示第 1 到第 10 条记录，总共 582 条记录 每页显示</div>
<div class="abs" style="left:715px;top:724px;width:62.5px;height:38.5px;border:1px solid #ddd;border-radius:4px;background:#f4f4f4;line-height:36px;font-size:15.1px;color:#444;text-align:center">10 <i style="display:inline-block;width:0;height:0;border-left:5px solid transparent;border-right:5px solid transparent;border-bottom:5px solid #444;vertical-align:2px"></i></div>
<div class="abs" style="left:783px;top:732px;line-height:20px;font-size:16.35px;color:#333">条记录</div>
<div class="abs" style="left:1479.3px;top:721.5px;width:80.7px;height:39.5px;border:1px solid #dfdfdf;border-radius:4px 0 0 4px;background:#fafafa;color:#666;line-height:37px;text-align:center;font-size:16.35px">上一页</div>
<div class="abs" style="left:1559px;top:721.5px;width:42.8px;height:39.5px;border:1px solid #303d4e;background:#303d4e;color:#fff;line-height:37px;text-align:center;font-size:16.35px">1</div>
<div class="abs" style="left:1600.8px;top:721.5px;width:40.5px;height:39.5px;border:1px solid #dfdfdf;background:#fafafa;color:#666;line-height:37px;text-align:center;font-size:16.35px">2</div>
<div class="abs" style="left:1640.3px;top:721.5px;width:41.4px;height:39.5px;border:1px solid #dfdfdf;background:#fafafa;color:#666;line-height:37px;text-align:center;font-size:16.35px">3</div>
<div class="abs" style="left:1680.7px;top:721.5px;width:41.3px;height:39.5px;border:1px solid #dfdfdf;background:#fafafa;color:#666;line-height:37px;text-align:center;font-size:16.35px">4</div>
<div class="abs" style="left:1721px;top:721.5px;width:42.5px;height:39.5px;border:1px solid #dfdfdf;background:#fafafa;color:#666;line-height:37px;text-align:center;font-size:16.35px">5</div>
<div class="abs" style="left:1762.5px;top:721.5px;width:46.5px;height:39.5px;border:1px solid #dfdfdf;background:#fff;color:#666;line-height:37px;text-align:center;font-size:16.35px">...</div>
<div class="abs" style="left:1808px;top:721.5px;width:50.0px;height:39.5px;border:1px solid #dfdfdf;background:#fafafa;color:#666;line-height:37px;text-align:center;font-size:16.35px">59</div>
<div class="abs" style="left:1857px;top:721.5px;width:81.7px;height:39.5px;border:1px solid #dfdfdf;border-radius:0 4px 4px 0;background:#fafafa;color:#666;line-height:37px;text-align:center;font-size:16.35px">下一页</div>
<div class="abs" style="left:1944.7px;top:721px;width:62.5px;height:39px;border:1px solid #d8d8d8;background:#fff"></div>
<div class="abs" style="left:2014.3px;top:722.3px;width:62px;height:38.5px;border:1px solid #ddd;border-radius:4px;background:#f4f4f4;color:#444;line-height:36px;text-align:center;font-size:15.1px">跳转</div>
<div class="abs" style="left:1857.5px;top:817.5px;font-size:31.5px;letter-spacing:1.7px;color:#f5f6f8;line-height:36px;font-weight:normal">FASTADMIN</div>
<svg class="abs" style="left:1798px;top:808px" width="45" height="56" viewBox="0 0 45 56"><path fill="#f5f6f8" stroke="#f5f6f8" stroke-width="6" stroke-linejoin="round" d="M22.5 3 L42 14.500 V41.500 L22.500 53 L3 41.500 V14.500 Z"/><path fill="#f2f4f6" d="M25 13 L12 30h8l-3 13 13-18h-8z"/></svg>
<div class="abs" style="left:1656px;top:113.7px;width:190px;height:38px;border:1px solid #d6d6d6;background:#fff;color:#999;font-size:15.1px;line-height:37px;padding-left:16px">搜索</div>
<div class="abs" style="left:1852.7px;top:113.3px;width:47.3px;height:38.8px;border:1px solid #ddd;border-radius:4px 0 0 4px;background:#f4f4f4;line-height:31px;text-align:center"><svg class="ic " width="15.10" height="15.10" viewBox="0 -1536 1792 1792" style="transform:translateY(2.5px) scale(.92,.78)"><path fill="#444" transform="scale(1,-1)" d="M384 352v-64q0 -13 -9.5 -22.5t-22.5 -9.5h-64q-13 0 -22.5 9.5t-9.5 22.5v64q0 13 9.5 22.5t22.5 9.5h64q13 0 22.5 -9.5t9.5 -22.5zM384 608v-64q0 -13 -9.5 -22.5t-22.5 -9.5h-64q-13 0 -22.5 9.5t-9.5 22.5v64q0 13 9.5 22.5t22.5 9.5h64q13 0 22.5 -9.5t9.5 -22.5z
M384 864v-64q0 -13 -9.5 -22.5t-22.5 -9.5h-64q-13 0 -22.5 9.5t-9.5 22.5v64q0 13 9.5 22.5t22.5 9.5h64q13 0 22.5 -9.5t9.5 -22.5zM1536 352v-64q0 -13 -9.5 -22.5t-22.5 -9.5h-960q-13 0 -22.5 9.5t-9.5 22.5v64q0 13 9.5 22.5t22.5 9.5h960q13 0 22.5 -9.5t9.5 -22.5z
M1536 608v-64q0 -13 -9.5 -22.5t-22.5 -9.5h-960q-13 0 -22.5 9.5t-9.5 22.5v64q0 13 9.5 22.5t22.5 9.5h960q13 0 22.5 -9.5t9.5 -22.5zM1536 864v-64q0 -13 -9.5 -22.5t-22.5 -9.5h-960q-13 0 -22.5 9.5t-9.5 22.5v64q0 13 9.5 22.5t22.5 9.5h960q13 0 22.5 -9.5
t9.5 -22.5zM1664 160v832q0 13 -9.5 22.5t-22.5 9.5h-1472q-13 0 -22.5 -9.5t-9.5 -22.5v-832q0 -13 9.5 -22.5t22.5 -9.5h1472q13 0 22.5 9.5t9.5 22.5zM1792 1248v-1088q0 -66 -47 -113t-113 -47h-1472q-66 0 -113 47t-47 113v1088q0 66 47 113t113 47h1472q66 0 113 -47
t47 -113z"/></svg></div>
<div class="abs" style="left:1899.7px;top:113.3px;width:62.3px;height:38.8px;border:1px solid #ddd;border-radius:0;background:#f4f4f4;line-height:31px;text-align:center"><svg class="ic " width="15.10" height="15.10" viewBox="0 -1536 1792 1792" style="transform:translateY(1px) scale(.95,.9)"><path fill="#444" transform="scale(1,-1)" d="M512 288v-192q0 -40 -28 -68t-68 -28h-320q-40 0 -68 28t-28 68v192q0 40 28 68t68 28h320q40 0 68 -28t28 -68zM512 800v-192q0 -40 -28 -68t-68 -28h-320q-40 0 -68 28t-28 68v192q0 40 28 68t68 28h320q40 0 68 -28t28 -68zM1152 288v-192q0 -40 -28 -68t-68 -28h-320
q-40 0 -68 28t-28 68v192q0 40 28 68t68 28h320q40 0 68 -28t28 -68zM512 1312v-192q0 -40 -28 -68t-68 -28h-320q-40 0 -68 28t-28 68v192q0 40 28 68t68 28h320q40 0 68 -28t28 -68zM1152 800v-192q0 -40 -28 -68t-68 -28h-320q-40 0 -68 28t-28 68v192q0 40 28 68t68 28
h320q40 0 68 -28t28 -68zM1792 288v-192q0 -40 -28 -68t-68 -28h-320q-40 0 -68 28t-28 68v192q0 40 28 68t68 28h320q40 0 68 -28t28 -68zM1152 1312v-192q0 -40 -28 -68t-68 -28h-320q-40 0 -68 28t-28 68v192q0 40 28 68t68 28h320q40 0 68 -28t28 -68zM1792 800v-192
q0 -40 -28 -68t-68 -28h-320q-40 0 -68 28t-28 68v192q0 40 28 68t68 28h320q40 0 68 -28t28 -68zM1792 1312v-192q0 -40 -28 -68t-68 -28h-320q-40 0 -68 28t-28 68v192q0 40 28 68t68 28h320q40 0 68 -28t28 -68z"/></svg></div>
<div class="abs" style="left:1961.7px;top:113.3px;width:60.0px;height:38.8px;border:1px solid #ddd;border-radius:0 4px 4px 0;background:#f4f4f4;line-height:31px;text-align:center"><svg class="ic" width="15" height="15" viewBox="0 0 15 15"><path fill="#444" d="M0 11h15v3.5H0zM2 10l2.2-4h2.3l-.8 4zM13 10l-2.2-4H9.6l.9 4zM5 0.5h7.5v7.5l-2.6-2.6L7 8.3 4.7 6 7.6 3.1z"/></svg> <i style="display:inline-block;width:0;height:0;border-left:5px solid transparent;border-right:5px solid transparent;border-top:5px solid #444;vertical-align:1px;margin-left:2px"></i></div>
<div class="abs" style="left:2029.5px;top:113.3px;width:46.3px;height:38.8px;border:1px solid #ddd;border-radius:4px;background:#f4f4f4;line-height:31px;text-align:center"><svg class="ic " width="14.02" height="15.10" viewBox="0 -1536 1664 1792" style=""><path fill="#444" transform="scale(1,-1)" d="M1152 704q0 185 -131.5 316.5t-316.5 131.5t-316.5 -131.5t-131.5 -316.5t131.5 -316.5t316.5 -131.5t316.5 131.5t131.5 316.5zM1664 -128q0 -52 -38 -90t-90 -38q-54 0 -90 38l-343 342q-179 -124 -399 -124q-143 0 -273.5 55.5t-225 150t-150 225t-55.5 273.5
t55.5 273.5t150 225t225 150t273.5 55.5t273.5 -55.5t225 -150t150 -225t55.5 -273.5q0 -220 -124 -399l343 -343q37 -37 37 -90z"/></svg></div>
<div class="abs" style="left:1721.7px;top:78.3px;width:377.3px;height:82.5px;border-radius:4px;background:rgb(110,172,222);opacity:.8;color:#fff;font-size:16.35px"> <svg class="abs" style="left:21px;top:27px" width="27" height="31" viewBox="0 0 27 31"><path fill="#fff" d="M12.5 0a12.5 12.5 0 1 0 4.2 24.3c1.6 2.8 4 4.8 7.3 5.9-1.700-1.700-2.800-4.600-3.200-8.300A12.5 12.5 0 0 0 12.500 0z"/><text x="12.700" y="19.600" text-anchor="middle" font-family="Liberation Serif,serif" font-weight="bold" font-size="21" fill="rgb(110,172,222)">i</text></svg><div class="abs" style="left:63px;top:21px;line-height:20px;font-weight:bold;white-space:nowrap">消息提示</div><div class="abs" style="left:63px;top:42px;line-height:20px;white-space:nowrap">蜃城酒肆有一个新订单</div></div>
</div></body></html>
